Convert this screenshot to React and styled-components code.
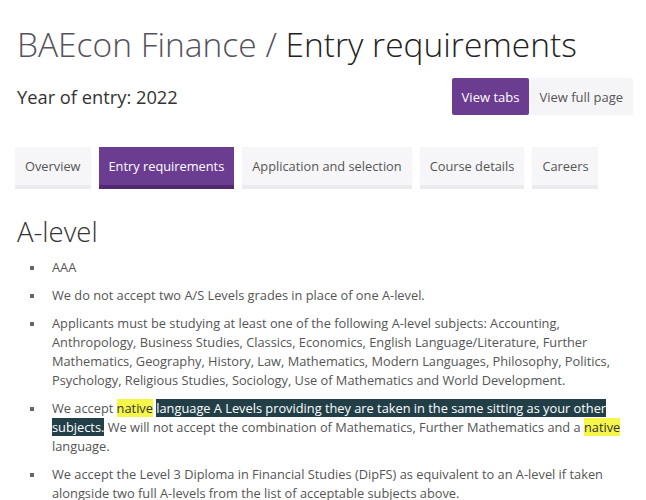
import React from "react";
import styled, { createGlobalStyle } from "styled-components";

const GlobalStyle = createGlobalStyle`
  body {
    margin: 0;
    background: #fff;
    font-family: "Open Sans", "Noto Sans", sans-serif;
  }
`;

const tabs = [
  "Overview",
  "Entry requirements",
  "Application and selection",
  "Course details",
  "Careers",
];

export default function App() {
  return (
    <>
      <GlobalStyle />
      <Page>
        <Title>
          <span className="course">BAEcon Finance / </span>
          <span className="section">Entry requirements</span>
        </Title>

        <YearRow>
          <Year>Year of entry: 2022</Year>
          <ViewToggle>
            <ToggleButton $active>View tabs</ToggleButton>
            <ToggleButton>View full page</ToggleButton>
          </ViewToggle>
        </YearRow>

        <Tabs>
          {tabs.map((t) => (
            <Tab key={t} $active={t === "Entry requirements"}>
              {t}
            </Tab>
          ))}
        </Tabs>

        <Heading>A-level</Heading>
        <List>
          <Item>AAA</Item>
          <Item>We do not accept two A/S Levels grades in place of one A-level.</Item>
          <Item>
            Applicants must be studying at least one of the following A-level
            subjects: Accounting, Anthropology, Business Studies, Classics,
            Economics, English Language/Literature, Further Mathematics,
            Geography, History, Law, Mathematics, Modern Languages, Philosophy,
            Politics, Psychology, Religious Studies, Sociology, Use of
            Mathematics and World Development.
          </Item>
          <Item>
            We accept <Mark>native</Mark>{" "}
            <Selected>
              language A Levels providing they are taken in the same sitting as
              your other subjects.
            </Selected>{" "}
            We will not accept the combination of Mathematics, Further
            Mathematics and a <Mark>native</Mark> language.
          </Item>
          <Item>
            We accept the Level 3 Diploma in Financial Studies (DipFS) as
            equivalent to an A-level if taken alongside two full A-levels from
            the list of acceptable subjects above.
          </Item>
        </List>
      </Page>
    </>
  );
}

const Page = styled.div`
  padding: 20px 13px 0 17px;
`;

const Title = styled.h1`
  margin: 0;
  font-size: 33.5px;
  font-weight: 300;
  line-height: 48px;
  .course {
    color: #55525c;
  }
  .section {
    color: #222;
  }
`;

const YearRow = styled.div`
  display: flex;
  justify-content: space-between;
  align-items: center;
  margin-top: 10px;
`;

const Year = styled.div`
  font-size: 18.3px;
  color: #333;
`;

const ViewToggle = styled.div`
  display: flex;
  background: #f5f4f7;
  border-radius: 2px;
`;

const ToggleButton = styled.div`
  height: 37px;
  display: flex;
  align-items: center;
  padding: 0 10px;
  font-size: 13px;
  border-radius: 2px;
  color: ${(p) => (p.$active ? "#fff" : "#555")};
  background: ${(p) => (p.$active ? "#6b3d91" : "transparent")};
`;

const Tabs = styled.div`
  display: flex;
  gap: 8px;
  margin: 32px 0 0 -2px;
`;

const Tab = styled.div`
  height: 38px;
  display: flex;
  align-items: center;
  padding: 0 10px;
  font-size: 12.8px;
  color: ${(p) => (p.$active ? "#fff" : "#555")};
  background: ${(p) => (p.$active ? "#6b3d91" : "#f6f5f8")};
  border-bottom: 4px solid ${(p) => (p.$active ? "#52296f" : "#ecebef")};
`;

const Heading = styled.h2`
  margin: 23px 0 0;
  font-size: 27.5px;
  font-weight: 300;
  color: #333;
  line-height: 40px;
`;

const List = styled.ul`
  margin: 6px 0 0;
  padding: 0 0 0 35px;
  list-style: none;
`;

const Item = styled.li`
  position: relative;
  font-size: 12.8px;
  line-height: 19px;
  color: #555;
  margin-bottom: 9px;
  &::before {
    content: "";
    position: absolute;
    left: -22px;
    top: 8px;
    width: 4px;
    height: 4px;
    background: #666;
  }
`;

const Mark = styled.span`
  background: #f6f64a;
  color: #333;
`;

const Selected = styled.span`
  background: #223f48;
  color: #fff;
`;
